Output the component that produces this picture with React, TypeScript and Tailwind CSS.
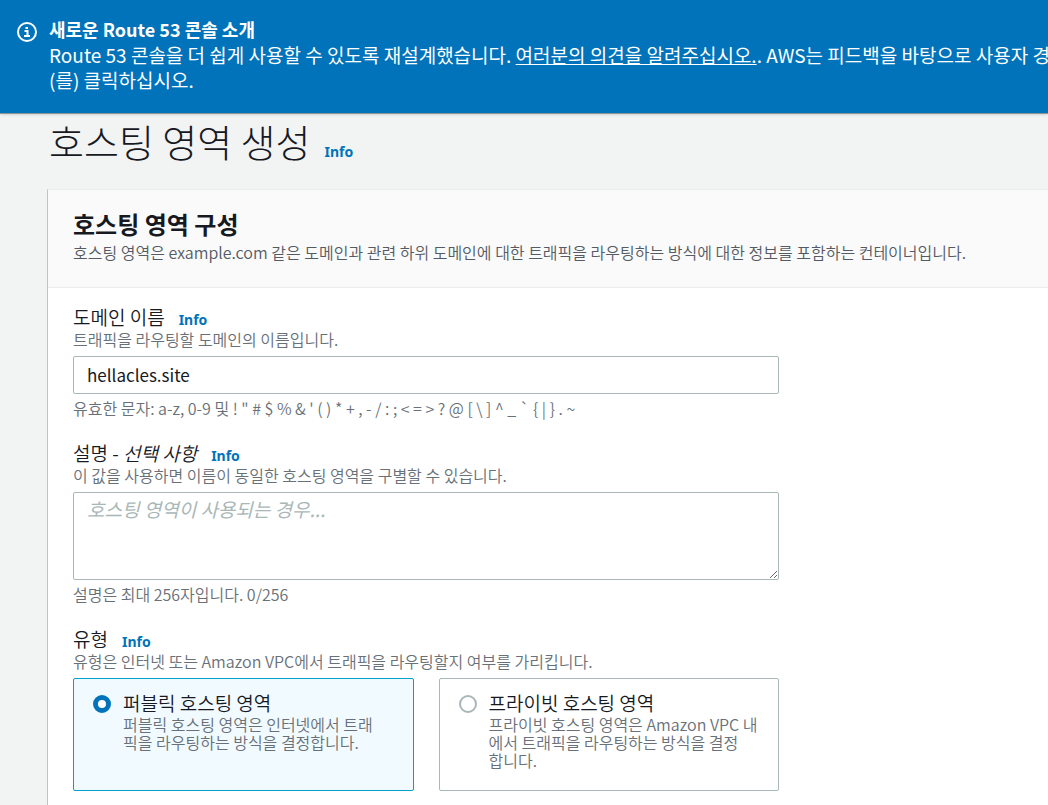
import { useState } from 'react';
import type { ReactNode } from 'react';

const zoneTypes = [
  {
    value: 'public',
    title: '퍼블릭 호스팅 영역',
    description: '퍼블릭 호스팅 영역은 인터넷에서 트래\n픽을 라우팅하는 방식을 결정합니다.',
  },
  {
    value: 'private',
    title: '프라이빗 호스팅 영역',
    description: '프라이빗 호스팅 영역은 Amazon VPC 내\n에서 트래픽을 라우팅하는 방식을 결정\n합니다.',
  },
];

function InfoLink() {
  return (
    <a href="#info" className="font-['Noto_Sans',sans-serif] text-[14px] font-bold text-[#0073bb]">
      Info
    </a>
  );
}

function InfoIcon() {
  return (
    <svg viewBox="0 0 20 20" className="mt-[22px] size-5 shrink-0" fill="none" stroke="white" strokeWidth="2" aria-hidden="true">
      <circle cx="10" cy="10" r="9" />
      <path d="M7.5 9h3v5M7 14h6M8.5 6h2.5" />
    </svg>
  );
}

function Banner() {
  return (
    <div className="flex h-[114px] overflow-hidden border-b border-[#8d9496] bg-[#0073bb] pl-[17px] text-white shadow-sm">
      <InfoIcon />
      <div className="ml-3 mt-[17px] text-[19px] leading-[25px] whitespace-nowrap">
        <p className="text-[18px] font-bold">새로운 Route 53 콘솔 소개</p>
        <p>
          Route 53 콘솔을 더 쉽게 사용할 수 있도록 재설계했습니다.{' '}
          <a href="#feedback" className="underline">
            여러분의 의견을 알려주십시오.
          </a>
          . AWS는 피드백을 바탕으로 사용자 경험
          <br />
          (를) 클릭하십시오.
        </p>
      </div>
    </div>
  );
}

type FieldHeadProps = {
  label: ReactNode;
  htmlFor?: string;
  id?: string;
  description: string;
};

function FieldHead({ label, htmlFor, id, description }: FieldHeadProps) {
  return (
    <div>
      <div className="flex h-[23px] items-baseline gap-[14px] leading-[22px]">
        {htmlFor ? (
          <label htmlFor={htmlFor} className="text-[19px] font-[350]">
            {label}
          </label>
        ) : (
          <span id={id} className="text-[19px] font-[350]">
            {label}
          </span>
        )}
        <InfoLink />
      </div>
      <p className="text-[16px] leading-5 font-[350] text-[#687078]">{description}</p>
    </div>
  );
}

export default function App() {
  const [domain, setDomain] = useState('hellacles.site');
  const [description, setDescription] = useState('');
  const [zoneType, setZoneType] = useState('public');

  return (
    <div className="flex min-h-screen flex-col overflow-hidden bg-[#f2f3f3] font-['Noto_Sans_CJK_KR',sans-serif] text-[#16191f]">
      <Banner />
      <main className="flex grow flex-col pl-[47px]">
        <div className="flex h-[75px] items-baseline gap-[14px] pl-[2px] leading-[54px]">
          <h1 className="text-[38px] font-light">호스팅 영역 생성</h1>
          <InfoLink />
        </div>

        <section className="grow border-t border-l border-t-[#eaeded] border-l-[#bfc4c6] bg-white">
          <header className="h-[98px] border-b border-[#eaeded] bg-[#fafafa] px-[25px] pt-[18px]">
            <h2 className="text-[24px] leading-8 font-bold">호스팅 영역 구성</h2>
            <p className="text-[16px] leading-6 font-[350] text-[#545b64]">
              호스팅 영역은 example.com 같은 도메인과 관련 하위 도메인에 대한 트래픽을 라우팅하는 방식에 대한 정보를 포함하는 컨테이너입니다.
            </p>
          </header>

          <form className="flex max-w-[756px] flex-col gap-6 px-[25px] pt-[18px]">
            <div>
              <FieldHead label="도메인 이름" htmlFor="domain" description="트래픽을 라우팅할 도메인의 이름입니다." />
              <input
                id="domain"
                type="text"
                value={domain}
                onChange={(e) => setDomain(e.target.value)}
                className="mt-[7px] block h-[38px] w-full rounded-xs border border-[#aab7b8] bg-white px-[13px] pb-[2px] text-[17px]"
              />
              <p className="mt-1 text-[16px] leading-5 font-[350] text-[#687078]">
                {'유효한 문자: a-z, 0-9 및 ! " # $ % & \' ( ) * + , - / : ; < = > ? @ [ \\ ] ^ _ ` { | } . ~'}
              </p>
            </div>

            <div>
              <FieldHead
                label={
                  <>
                    설명 - <i>선택 사항</i>
                  </>
                }
                htmlFor="description"
                description="이 값을 사용하면 이름이 동일한 호스팅 영역을 구별할 수 있습니다."
              />
              <textarea
                id="description"
                maxLength={256}
                value={description}
                onChange={(e) => setDescription(e.target.value)}
                placeholder="호스팅 영역이 사용되는 경우..."
                className="mt-[7px] block h-[88px] w-full rounded-xs border border-[#aab7b8] bg-white px-[13px] py-1 text-[19px] leading-6 placeholder:text-[#aab7b8] placeholder:italic"
              />
              <p className="mt-1 text-[16px] leading-5 font-[350] text-[#687078]">설명은 최대 256자입니다. {description.length}/256</p>
            </div>

            <div role="radiogroup" aria-labelledby="zone-type">
              <FieldHead label="유형" id="zone-type" description="유형은 인터넷 또는 Amazon VPC에서 트래픽을 라우팅할지 여부를 가리킵니다." />
              <div className="mt-[7px] grid grid-cols-2 gap-[25px]">
                {zoneTypes.map((type) => (
                  <label
                    key={type.value}
                    className={`flex min-h-[113px] gap-3 rounded-xs border pt-3 pr-4 pl-[19px] ${
                      zoneType === type.value ? 'border-[#00a1c9] bg-[#f1faff]' : 'border-[#aab7b8] bg-white'
                    }`}
                  >
                    <input
                      type="radio"
                      name="zoneType"
                      value={type.value}
                      checked={zoneType === type.value}
                      onChange={() => setZoneType(type.value)}
                      className="mt-1 size-[18px] shrink-0 appearance-none rounded-full border-2 border-[#aab7b8] bg-white checked:border-[5px] checked:border-[#0073bb]"
                    />
                    <span>
                      <span className="block text-[19px] leading-6 font-[350]">{type.title}</span>
                      <span className="block text-[16px] leading-[18px] font-[350] whitespace-pre-line text-[#687078]">
                        {type.description}
                      </span>
                    </span>
                  </label>
                ))}
              </div>
            </div>
          </form>
        </section>
      </main>
    </div>
  );
}
